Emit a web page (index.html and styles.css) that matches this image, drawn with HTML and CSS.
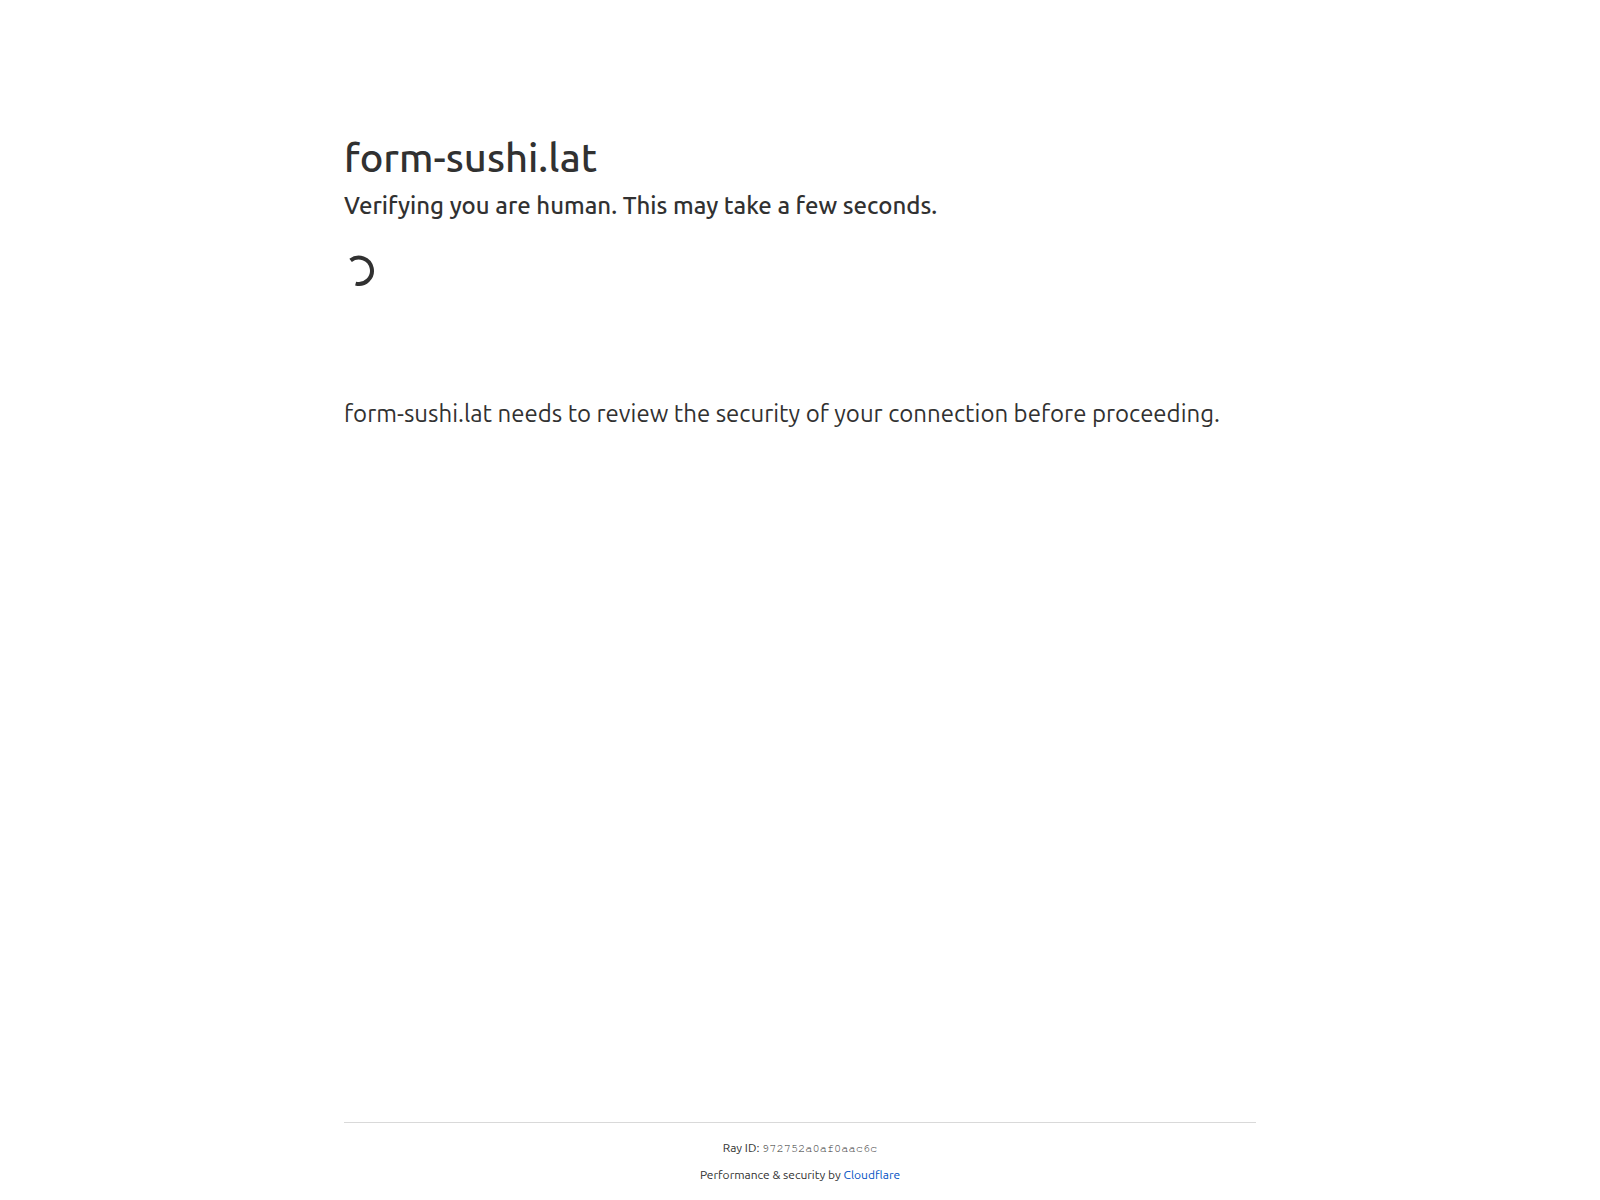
FILE: index.html
```html
<!DOCTYPE html>
<html lang="en">
<head>
  <meta charset="UTF-8" />
  <meta name="viewport" content="width=device-width, initial-scale=1.0" />
  <title>Just a moment...</title>
  <link rel="stylesheet" href="styles.css">
</head>
<body>
  <main class="main-content">
    <h1>form-sushi.lat</h1>
    <h2>Verifying you are human. This may take a few seconds.</h2>
    <svg class="spinner" viewBox="0 0 30 30" role="img" aria-label="Loading">
      <path d="M6.6 4.4A13.2 13.2 0 1 1 11.6 27.6" />
    </svg>
    <p class="message">form-sushi.lat needs to review the security of your connection before proceeding.</p>
  </main>
  <footer class="footer">
    <div class="footer-inner">
      <p>Ray ID: <code>972752a0af0aac6c</code></p>
      <p>Performance &amp; security by <a href="https://www.cloudflare.com">Cloudflare</a></p>
    </div>
  </footer>
</body>
</html>
```
FILE: styles.css
```css
/* Reset and Base Styles */
* {
  margin: 0;
  padding: 0;
  box-sizing: border-box;
}
body {
  display: flex;
  flex-direction: column;
  min-height: 100vh;
  background: #fff;
  color: #313131;
  font-family: Ubuntu, "Noto Sans", sans-serif;
}
/* Main Content */
.main-content {
  flex: 1;
  width: 100%;
  max-width: 960px;
  margin: 0 auto;
  padding: 128px 24px 0;
}
h1 {
  font-size: 40px;
  font-weight: 500;
  line-height: 60px;
}
h2 {
  font-size: 24px;
  font-weight: 500;
  line-height: 36px;
}
.spinner {
  display: block;
  width: 30px;
  height: 30px;
  margin: 32px 0 110px;
  overflow: visible;
}
.spinner path {
  fill: none;
  stroke: #313131;
  stroke-width: 4;
}
.message {
  font-size: 24px;
  line-height: 36px;
}
/* Footer */
.footer {
  width: 100%;
  max-width: 960px;
  margin: 0 auto;
  padding: 0 24px;
  font-size: 12px;
  line-height: 18px;
  text-align: center;
}
.footer-inner {
  display: flex;
  flex-direction: column;
  gap: 9px;
  padding: 16px 0;
  border-top: 1px solid #d9d9d9;
}
.footer code {
  font-family: FreeMono, "Nimbus Mono PS", "Liberation Mono", monospace;
  font-size: 12px;
}
.footer a {
  color: #0051c3;
  text-decoration: none;
}
```
